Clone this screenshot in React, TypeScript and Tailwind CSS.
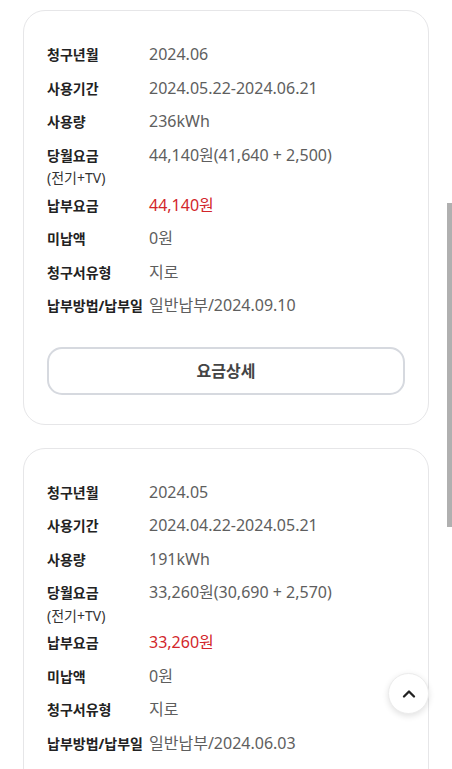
import React from "react";
import { ChevronUp } from "lucide-react";

type Bill = {
  month: string;
  period: string;
  usage: string;
  total: string;
  paid: string;
  unpaid: string;
  billType: string;
  payment: string;
};

const bills: Bill[] = [
  {
    month: "2024.06",
    period: "2024.05.22-2024.06.21",
    usage: "236kWh",
    total: "44,140원(41,640 + 2,500)",
    paid: "44,140원",
    unpaid: "0원",
    billType: "지로",
    payment: "일반납부/2024.09.10",
  },
  {
    month: "2024.05",
    period: "2024.04.22-2024.05.21",
    usage: "191kWh",
    total: "33,260원(30,690 + 2,570)",
    paid: "33,260원",
    unpaid: "0원",
    billType: "지로",
    payment: "일반납부/2024.06.03",
  },
];

const Row = ({
  label,
  sub,
  value,
  red,
}: {
  label: string;
  sub?: string;
  value: string;
  red?: boolean;
}) => {
  return (
    <div className="flex items-start">
      <div className="w-[102px] shrink-0">
        <p className="text-[14px] font-bold leading-[33.5px] text-[#222] whitespace-nowrap">
          {label}
        </p>
        {sub && (
          <p className="-mt-[4px] text-[14px] leading-[20.5px] text-[#333]">{sub}</p>
        )}
      </div>
      <p
        className={`text-[16px] leading-[33.5px] whitespace-nowrap ${
          red ? "text-[#d2262b]" : "text-[#5e5e5e]"
        }`}
      >
        {value}
      </p>
    </div>
  );
};

const BillCard = ({ bill }: { bill: Bill }) => {
  return (
    <div className="rounded-[22px] border border-[#e6e6e8] bg-white px-[23px] pt-[27px] pb-[29px]">
      <Row label="청구년월" value={bill.month} />
      <Row label="사용기간" value={bill.period} />
      <Row label="사용량" value={bill.usage} />
      <Row label="당월요금" sub="(전기+TV)" value={bill.total} />
      <Row label="납부요금" value={bill.paid} red />
      <Row label="미납액" value={bill.unpaid} />
      <Row label="청구서유형" value={bill.billType} />
      <Row label="납부방법/납부일" value={bill.payment} />
      <button className="mt-[24px] flex h-[48px] w-full items-center justify-center rounded-[15px] border-2 border-[#d6d9df] bg-white text-[16px] font-bold text-[#444]">
        요금상세
      </button>
    </div>
  );
};

const App = () => {
  return (
    <div
      className="relative h-[769px] overflow-hidden bg-white"
      style={{ fontFamily: '"Noto Sans", "Noto Sans CJK KR", sans-serif' }}
    >
      <div className="flex flex-col gap-[23px] px-[23px] pt-[10px]">
        {bills.map((bill) => (
          <BillCard key={bill.month} bill={bill} />
        ))}
      </div>

      {/* scroll indicator */}
      <div className="absolute right-0 top-[203px] h-[324px] w-[5px] bg-[#b0b0b0]" />

      <button className="absolute right-[23px] top-[673px] flex h-[41px] w-[41px] items-center justify-center rounded-full border border-[#ececec] bg-white shadow-[0_2px_6px_rgba(0,0,0,0.12)]">
        <ChevronUp size={20} strokeWidth={2.8} color="#222" />
      </button>
    </div>
  );
};

export default App;
